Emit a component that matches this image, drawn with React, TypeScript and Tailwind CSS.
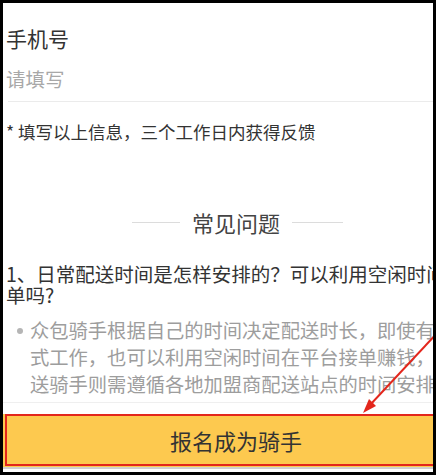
import React from 'react';

const font = { fontFamily: '"Noto Sans CJK SC", "Noto Sans", sans-serif' };

export default function App() {
    return (
        <div className="w-[436px] h-[475px] bg-black pt-[3px] pl-[3px] pr-[3px] pb-[3px]" style={font}>
            <div className="relative h-full bg-white overflow-hidden">
                <div className="w-[466px] pl-[3px]">
                    <div className="mt-[20px] h-[30px] leading-[30px] text-[21px] text-[#333]">手机号</div>
                    <div className="mt-[11px] h-[30px] leading-[30px] text-[19.5px] text-[#a8a8a8]">请填写</div>
                    <div className="mt-[7px] ml-[2px] h-px bg-[#ebebeb]" />

                    <div className="mt-[17px] h-[26px] leading-[26px] text-[17.5px] text-[#333] whitespace-nowrap">
                        * 填写以上信息，三个工作日内获得反馈
                    </div>

                    <div className="mt-[62px] h-[30px] flex items-center justify-center gap-[12px]">
                        <span className="w-[48px] h-px bg-[#dcdcdc]" />
                        <span className="text-[22px] leading-[30px] text-[#444]">常见问题</span>
                        <span className="w-[51px] h-px bg-[#dcdcdc]" />
                    </div>

                    <div className="mt-[26px] text-[19.5px] leading-[21px] text-[#333] whitespace-nowrap">
                        <div>1、日常配送时间是怎样安排的？可以利用空闲时间接</div>
                        <div>单吗?</div>
                    </div>

                    <div className="mt-[12px] flex gap-[8px] pl-[11px]">
                        <span className="mt-[11px] w-[6px] h-[6px] rounded-full bg-[#b5b5b5] shrink-0" />
                        <div className="-ml-[1px] text-[19.3px] leading-[27px] text-[#9d9d9d] whitespace-nowrap">
                            <div>众包骑手根据自己的时间决定配送时长，即使有正</div>
                            <div>式工作，也可以利用空闲时间在平台接单赚钱，专</div>
                            <div>送骑手则需遵循各地加盟商配送站点的时间安排。</div>
                        </div>
                    </div>
                </div>

                <div className="mt-[4px] h-px bg-[#efefef]" />

                <div className="relative mt-[11px] w-[466px] h-[53px] bg-[#fdc94f] flex items-center justify-center">
                    <span className="text-[22px] text-[#333]">报名成为骑手</span>
                    <div className="absolute left-[2px] top-0 right-[-4px] bottom-[1px] border-2 border-[#e3261c]" />
                </div>
                <div className="h-[2px] bg-[#cfcfcf]" />

                <svg className="absolute left-0 top-0" width="430" height="469" viewBox="0 0 430 469">
                    <line x1="437" y1="327" x2="367" y2="402" stroke="#e3261c" strokeWidth="2" />
                    <polygon points="360,410 373,403 366,396" fill="#e3261c" />
                </svg>
            </div>
        </div>
    );
}
